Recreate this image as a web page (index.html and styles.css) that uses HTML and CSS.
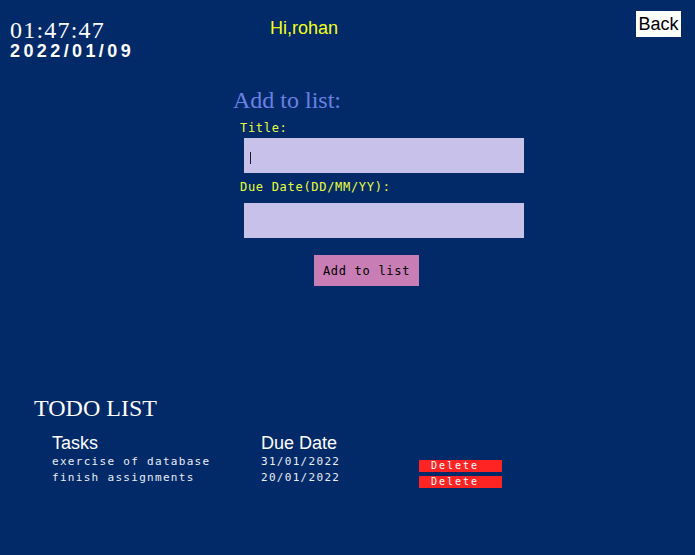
FILE: index.html
```html
<!DOCTYPE html>
<html lang="en">
<head>
<meta charset="utf-8">
<title>Todo</title>
<link rel="stylesheet" href="styles.css">
</head>
<body>
<header class="topbar">
  <div class="clock">
    <div class="time">01:47:47</div>
    <div class="date">2022/01/09</div>
  </div>
  <div class="greeting">Hi,rohan</div>
  <button class="back">Back</button>
</header>

<section class="add">
  <h2 class="add-title">Add to list:</h2>
  <label class="field-label" for="title">Title:</label>
  <span class="field-wrap focused"><input class="field" id="title" type="text" autofocus></span>
  <label class="field-label label-due" for="due">Due Date(DD/MM/YY):</label>
  <span class="field-wrap field-due"><input class="field" id="due" type="text"></span>
  <button class="add-btn">Add to list</button>
</section>

<section class="todo">
  <h2 class="todo-title">TODO LIST</h2>
  <table class="todo-table">
    <thead>
      <tr class="head-row"><th class="c-task">Tasks</th><th class="c-date">Due Date</th><th class="c-del"></th></tr>
    </thead>
    <tbody>
      <tr><td>exercise of database</td><td>31/01/2022</td><td><button class="del">Delete</button></td></tr>
      <tr><td>finish assignments</td><td>20/01/2022</td><td><button class="del">Delete</button></td></tr>
    </tbody>
  </table>
</section>
</body>
</html>
```

FILE: styles.css
```css
html, body {
  margin: 0;
  padding: 0;
}
body {
  background: #022a68;
  width: 695px;
  height: 555px;
  overflow: hidden;
  font-family: "Liberation Sans", Arial, sans-serif;
}

.topbar {
  display: flex;
  align-items: flex-start;
  padding: 11px 14px 0 10px;
  height: 49px;
}
.clock {
  width: 260px;
  margin-top: 7px;
  color: #ffffff;
}
.time {
  font-family: "Liberation Serif", "Times New Roman", serif;
  font-size: 24px;
  line-height: 24px;
  letter-spacing: 1.2px;
}
.date {
  font-size: 18px;
  line-height: 18px;
  font-weight: bold;
  letter-spacing: 3.4px;
}
.greeting {
  flex: 1;
  margin-top: 8px;
  color: #f4ff1a;
  font-size: 18px;
  line-height: 18px;
}
.back {
  width: 45px;
  height: 26px;
  padding: 0;
  border: none;
  background: #ffffff;
  color: #000000;
  font-family: "Liberation Sans", Arial, sans-serif;
  font-size: 18px;
  line-height: 26px;
}

.add {
  display: flex;
  flex-direction: column;
  align-items: flex-start;
  margin-left: 233px;
  padding-top: 28px;
}
.add-title {
  margin: 0;
  font-family: "Liberation Serif", "Times New Roman", serif;
  font-weight: normal;
  font-size: 24px;
  line-height: 24px;
  color: #6c80e4;
}
.field-label {
  margin: 8px 0 0 7px;
  font-family: "DejaVu Sans Mono", monospace;
  font-size: 12px;
  line-height: 16px;
  letter-spacing: 0.7px;
  color: #eaff3c;
}
.label-due {
  margin-top: 6px;
}
.field-wrap {
  position: relative;
  display: block;
  margin: 2px 0 0 11px;
  width: 280px;
  height: 35px;
}
.field-wrap.focused::after {
  content: "";
  position: absolute;
  left: 6px;
  top: 14px;
  width: 1px;
  height: 12px;
  background: #1a1a2a;
}
.field-due {
  margin-top: 8px;
}
.field {
  display: block;
  width: 280px;
  height: 35px;
  box-sizing: border-box;
  border: none;
  outline: none;
  padding: 4px 6px 0;
  background: #c8c1e9;
  caret-color: transparent;
  font-family: "DejaVu Sans Mono", monospace;
  font-size: 12px;
}
.add-btn {
  margin: 17px 0 0 81px;
  width: 105px;
  height: 31px;
  padding: 0;
  border: none;
  background: #c97db5;
  color: #000000;
  font-family: "DejaVu Sans Mono", monospace;
  font-size: 12px;
  letter-spacing: 0.7px;
}

.todo {
  margin: 110px 0 0 34px;
}
.todo-title {
  margin: 0;
  font-family: "Liberation Serif", "Times New Roman", serif;
  font-weight: normal;
  font-size: 24px;
  line-height: 24px;
  color: #ffffff;
}
.todo-table {
  margin: 13px 0 0 18px;
  border-collapse: collapse;
  border-spacing: 0;
  color: #eceef4;
}
.todo-table th,
.todo-table td {
  padding: 0;
  text-align: left;
  vertical-align: top;
}
.todo-table th {
  height: 21px;
  font-family: "Liberation Sans", Arial, sans-serif;
  font-weight: normal;
  font-size: 18px;
  line-height: 20px;
  color: #ffffff;
}
.c-task { width: 209px; }
.c-date { width: 158px; }
.c-del { width: 83px; }
.todo-table td {
  height: 16px;
  font-family: "DejaVu Sans Mono", monospace;
  font-size: 11px;
  line-height: 16px;
  letter-spacing: 1.3px;
}
.del {
  display: block;
  margin: 6px 0 -2px 0;
  width: 83px;
  height: 12px;
  padding: 0 0 0 12px;
  border: none;
  background: #ff2424;
  color: #ffffff;
  text-align: left;
  font-family: "DejaVu Sans Mono", monospace;
  font-size: 10px;
  line-height: 12px;
  letter-spacing: 2px;
}
```
